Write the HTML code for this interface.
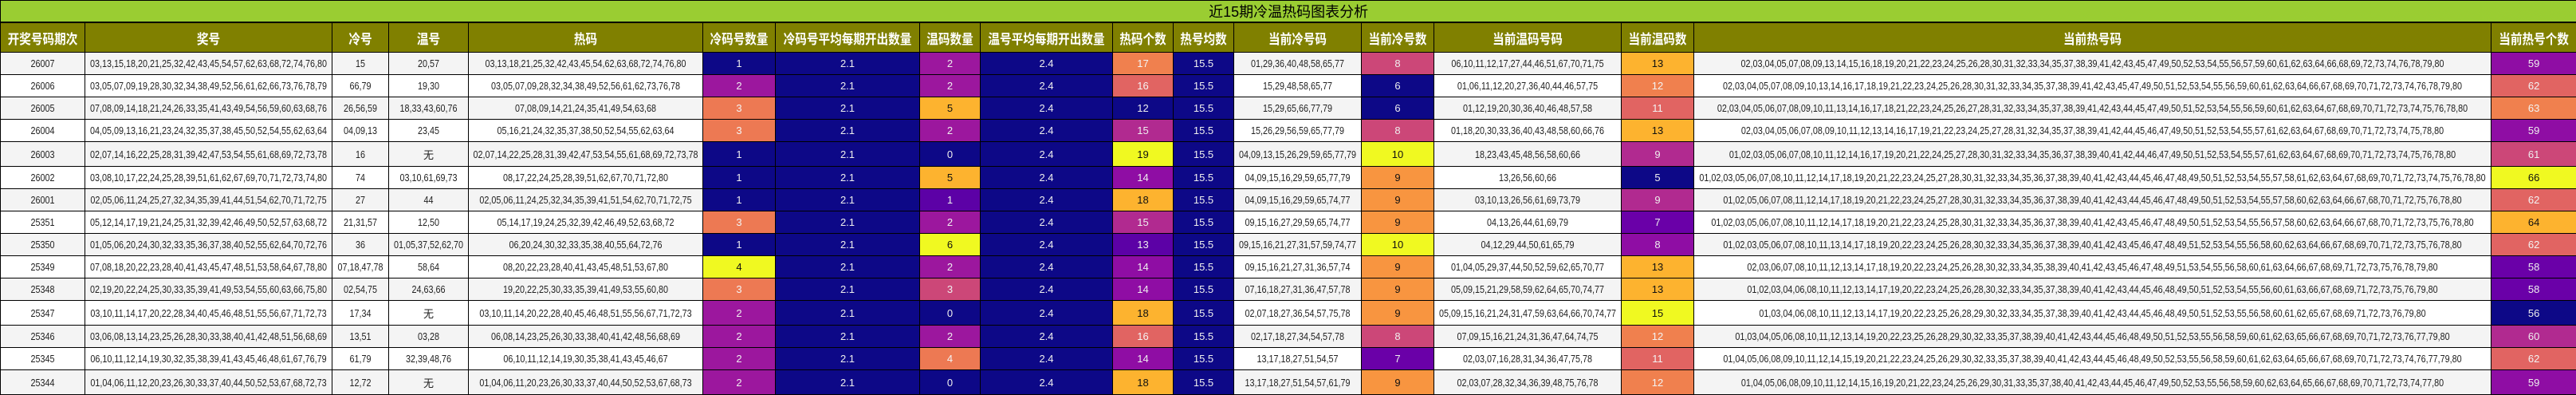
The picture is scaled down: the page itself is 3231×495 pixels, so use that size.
<!DOCTYPE html>
<html><head><meta charset="utf-8"><style>
html,body{margin:0;padding:0;background:#fff;width:3231px;height:495px;overflow:hidden}
table{border-collapse:collapse;table-layout:fixed;width:3231px;font-family:"Liberation Sans","Noto Sans CJK SC",sans-serif;font-size:13px}
td,th{border:1px solid #000;padding:0;text-align:center;white-space:nowrap;overflow:visible}
.t td{background:#9acd32;height:26px;font-size:18px;color:#000;border-bottom:2px solid #000}
.h th{background:#808000;color:#fff;font-size:17px;font-weight:bold;height:36px}
.h th i{transform:scaleX(.86)}
tr.d td{height:27px;color:#222}
tr.d.x td{height:30px}
tr.d:nth-child(odd) td{background:#f4f4f4}
tr.d:nth-child(even) td{background:#fff}
i{font-style:normal;display:flex;justify-content:center;transform:scaleX(.83)}
tr.d td.n{background:#0d0887;color:#eee}
tr.d td.p{background:#9c179e;color:#eee}
tr.d td.o{background:#ed7953;color:#f3f3f3}
tr.d td.y{background:#f0f921;color:#111}
tr.d td.a{background:#fdb32f;color:#111}
tr.d td.k{background:#cc4778;color:#eee}
tr.d td.s{background:#e16462;color:#f3f3f3}
tr.d td.v{background:#5c01a6;color:#eee}
tr.d td.m{background:#8f0da4;color:#eee}
tr.d td.r{background:#b12a90;color:#eee}
tr.d td.f{background:#f89540;color:#111}
tr.d td.q{background:#6a00a8;color:#eee}
tr.d td.e{background:#f0804e;color:#f3f3f3}
</style></head><body>
<table>
<colgroup><col style="width:106px"><col style="width:310px"><col style="width:71px"><col style="width:100px"><col style="width:294px"><col style="width:91px"><col style="width:181px"><col style="width:76px"><col style="width:166px"><col style="width:76px"><col style="width:76px"><col style="width:160px"><col style="width:91px"><col style="width:235px"><col style="width:91px"><col style="width:1000px"><col style="width:107px"></colgroup>
<tr class="t"><td colspan="17">近15期冷温热码图表分析</td></tr>
<tr class="h"><th><i>开奖号码期次</i></th><th><i>奖号</i></th><th><i>冷号</i></th><th><i>温号</i></th><th><i>热码</i></th><th><i>冷码号数量</i></th><th><i>冷码号平均每期开出数量</i></th><th><i>温码数量</i></th><th><i>温号平均每期开出数量</i></th><th><i>热码个数</i></th><th><i>热号均数</i></th><th><i>当前冷号码</i></th><th><i>当前冷号数</i></th><th><i>当前温码号码</i></th><th><i>当前温码数</i></th><th><i>当前热号码</i></th><th><i>当前热号个数</i></th></tr>

<tr class="d"><td><i>26007</i></td><td><i>03,13,15,18,20,21,25,32,42,43,45,54,57,62,63,68,72,74,76,80</i></td><td><i>15</i></td><td><i>20,57</i></td><td><i>03,13,18,21,25,32,42,43,45,54,62,63,68,72,74,76,80</i></td><td class="n">1</td><td class="n">2.1</td><td class="p">2</td><td class="n">2.4</td><td class="e">17</td><td class="n">15.5</td><td><i>01,29,36,40,48,58,65,77</i></td><td class="k">8</td><td><i>06,10,11,12,17,27,44,46,51,67,70,71,75</i></td><td class="a">13</td><td><i>02,03,04,05,07,08,09,13,14,15,16,18,19,20,21,22,23,24,25,26,28,30,31,32,33,34,35,37,38,39,41,42,43,45,47,49,50,52,53,54,55,56,57,59,60,61,62,63,64,66,68,69,72,73,74,76,78,79,80</i></td><td class="m">59</td></tr>

<tr class="d"><td><i>26006</i></td><td><i>03,05,07,09,19,28,30,32,34,38,49,52,56,61,62,66,73,76,78,79</i></td><td><i>66,79</i></td><td><i>19,30</i></td><td><i>03,05,07,09,28,32,34,38,49,52,56,61,62,73,76,78</i></td><td class="p">2</td><td class="n">2.1</td><td class="p">2</td><td class="n">2.4</td><td class="s">16</td><td class="n">15.5</td><td><i>15,29,48,58,65,77</i></td><td class="n">6</td><td><i>01,06,11,12,20,27,36,40,44,46,57,75</i></td><td class="e">12</td><td><i>02,03,04,05,07,08,09,10,13,14,16,17,18,19,21,22,23,24,25,26,28,30,31,32,33,34,35,37,38,39,41,42,43,45,47,49,50,51,52,53,54,55,56,59,60,61,62,63,64,66,67,68,69,70,71,72,73,74,76,78,79,80</i></td><td class="s">62</td></tr>

<tr class="d"><td><i>26005</i></td><td><i>07,08,09,14,18,21,24,26,33,35,41,43,49,54,56,59,60,63,68,76</i></td><td><i>26,56,59</i></td><td><i>18,33,43,60,76</i></td><td><i>07,08,09,14,21,24,35,41,49,54,63,68</i></td><td class="o">3</td><td class="n">2.1</td><td class="a">5</td><td class="n">2.4</td><td class="n">12</td><td class="n">15.5</td><td><i>15,29,65,66,77,79</i></td><td class="n">6</td><td><i>01,12,19,20,30,36,40,46,48,57,58</i></td><td class="s">11</td><td><i>02,03,04,05,06,07,08,09,10,11,13,14,16,17,18,21,22,23,24,25,26,27,28,31,32,33,34,35,37,38,39,41,42,43,44,45,47,49,50,51,52,53,54,55,56,59,60,61,62,63,64,67,68,69,70,71,72,73,74,75,76,78,80</i></td><td class="e">63</td></tr>

<tr class="d"><td><i>26004</i></td><td><i>04,05,09,13,16,21,23,24,32,35,37,38,45,50,52,54,55,62,63,64</i></td><td><i>04,09,13</i></td><td><i>23,45</i></td><td><i>05,16,21,24,32,35,37,38,50,52,54,55,62,63,64</i></td><td class="o">3</td><td class="n">2.1</td><td class="p">2</td><td class="n">2.4</td><td class="r">15</td><td class="n">15.5</td><td><i>15,26,29,56,59,65,77,79</i></td><td class="k">8</td><td><i>01,18,20,30,33,36,40,43,48,58,60,66,76</i></td><td class="a">13</td><td><i>02,03,04,05,06,07,08,09,10,11,12,13,14,16,17,19,21,22,23,24,25,27,28,31,32,34,35,37,38,39,41,42,44,45,46,47,49,50,51,52,53,54,55,57,61,62,63,64,67,68,69,70,71,72,73,74,75,78,80</i></td><td class="m">59</td></tr>

<tr class="d x"><td><i>26003</i></td><td><i>02,07,14,16,22,25,28,31,39,42,47,53,54,55,61,68,69,72,73,78</i></td><td><i>16</i></td><td>无</td><td><i>02,07,14,22,25,28,31,39,42,47,53,54,55,61,68,69,72,73,78</i></td><td class="n">1</td><td class="n">2.1</td><td class="n">0</td><td class="n">2.4</td><td class="y">19</td><td class="n">15.5</td><td><i>04,09,13,15,26,29,59,65,77,79</i></td><td class="y">10</td><td><i>18,23,43,45,48,56,58,60,66</i></td><td class="r">9</td><td><i>01,02,03,05,06,07,08,10,11,12,14,16,17,19,20,21,22,24,25,27,28,30,31,32,33,34,35,36,37,38,39,40,41,42,44,46,47,49,50,51,52,53,54,55,57,61,62,63,64,67,68,69,70,71,72,73,74,75,76,78,80</i></td><td class="k">61</td></tr>

<tr class="d"><td><i>26002</i></td><td><i>03,08,10,17,22,24,25,28,39,51,61,62,67,69,70,71,72,73,74,80</i></td><td><i>74</i></td><td><i>03,10,61,69,73</i></td><td><i>08,17,22,24,25,28,39,51,62,67,70,71,72,80</i></td><td class="n">1</td><td class="n">2.1</td><td class="a">5</td><td class="n">2.4</td><td class="m">14</td><td class="n">15.5</td><td><i>04,09,15,16,29,59,65,77,79</i></td><td class="f">9</td><td><i>13,26,56,60,66</i></td><td class="n">5</td><td><i>01,02,03,05,06,07,08,10,11,12,14,17,18,19,20,21,22,23,24,25,27,28,30,31,32,33,34,35,36,37,38,39,40,41,42,43,44,45,46,47,48,49,50,51,52,53,54,55,57,58,61,62,63,64,67,68,69,70,71,72,73,74,75,76,78,80</i></td><td class="y">66</td></tr>

<tr class="d"><td><i>26001</i></td><td><i>02,05,06,11,24,25,27,32,34,35,39,41,44,51,54,62,70,71,72,75</i></td><td><i>27</i></td><td><i>44</i></td><td><i>02,05,06,11,24,25,32,34,35,39,41,51,54,62,70,71,72,75</i></td><td class="n">1</td><td class="n">2.1</td><td class="v">1</td><td class="n">2.4</td><td class="a">18</td><td class="n">15.5</td><td><i>04,09,15,16,29,59,65,74,77</i></td><td class="f">9</td><td><i>03,10,13,26,56,61,69,73,79</i></td><td class="r">9</td><td><i>01,02,05,06,07,08,11,12,14,17,18,19,20,21,22,23,24,25,27,28,30,31,32,33,34,35,36,37,38,39,40,41,42,43,44,45,46,47,48,49,50,51,52,53,54,55,57,58,60,62,63,64,66,67,68,70,71,72,75,76,78,80</i></td><td class="s">62</td></tr>

<tr class="d"><td><i>25351</i></td><td><i>05,12,14,17,19,21,24,25,31,32,39,42,46,49,50,52,57,63,68,72</i></td><td><i>21,31,57</i></td><td><i>12,50</i></td><td><i>05,14,17,19,24,25,32,39,42,46,49,52,63,68,72</i></td><td class="o">3</td><td class="n">2.1</td><td class="p">2</td><td class="n">2.4</td><td class="r">15</td><td class="n">15.5</td><td><i>09,15,16,27,29,59,65,74,77</i></td><td class="f">9</td><td><i>04,13,26,44,61,69,79</i></td><td class="q">7</td><td><i>01,02,03,05,06,07,08,10,11,12,14,17,18,19,20,21,22,23,24,25,28,30,31,32,33,34,35,36,37,38,39,40,41,42,43,45,46,47,48,49,50,51,52,53,54,55,56,57,58,60,62,63,64,66,67,68,70,71,72,73,75,76,78,80</i></td><td class="a">64</td></tr>

<tr class="d"><td><i>25350</i></td><td><i>01,05,06,20,24,30,32,33,35,36,37,38,40,52,55,62,64,70,72,76</i></td><td><i>36</i></td><td><i>01,05,37,52,62,70</i></td><td><i>06,20,24,30,32,33,35,38,40,55,64,72,76</i></td><td class="n">1</td><td class="n">2.1</td><td class="y">6</td><td class="n">2.4</td><td class="v">13</td><td class="n">15.5</td><td><i>09,15,16,21,27,31,57,59,74,77</i></td><td class="y">10</td><td><i>04,12,29,44,50,61,65,79</i></td><td class="m">8</td><td><i>01,02,03,05,06,07,08,10,11,13,14,17,18,19,20,22,23,24,25,26,28,30,32,33,34,35,36,37,38,39,40,41,42,43,45,46,47,48,49,51,52,53,54,55,56,58,60,62,63,64,66,67,68,69,70,71,72,73,75,76,78,80</i></td><td class="s">62</td></tr>

<tr class="d"><td><i>25349</i></td><td><i>07,08,18,20,22,23,28,40,41,43,45,47,48,51,53,58,64,67,78,80</i></td><td><i>07,18,47,78</i></td><td><i>58,64</i></td><td><i>08,20,22,23,28,40,41,43,45,48,51,53,67,80</i></td><td class="y">4</td><td class="n">2.1</td><td class="p">2</td><td class="n">2.4</td><td class="m">14</td><td class="n">15.5</td><td><i>09,15,16,21,27,31,36,57,74</i></td><td class="f">9</td><td><i>01,04,05,29,37,44,50,52,59,62,65,70,77</i></td><td class="a">13</td><td><i>02,03,06,07,08,10,11,12,13,14,17,18,19,20,22,23,24,25,26,28,30,32,33,34,35,38,39,40,41,42,43,45,46,47,48,49,51,53,54,55,56,58,60,61,63,64,66,67,68,69,71,72,73,75,76,78,79,80</i></td><td class="q">58</td></tr>

<tr class="d"><td><i>25348</i></td><td><i>02,19,20,22,24,25,30,33,35,39,41,49,53,54,55,60,63,66,75,80</i></td><td><i>02,54,75</i></td><td><i>24,63,66</i></td><td><i>19,20,22,25,30,33,35,39,41,49,53,55,60,80</i></td><td class="o">3</td><td class="n">2.1</td><td class="k">3</td><td class="n">2.4</td><td class="m">14</td><td class="n">15.5</td><td><i>07,16,18,27,31,36,47,57,78</i></td><td class="f">9</td><td><i>05,09,15,21,29,58,59,62,64,65,70,74,77</i></td><td class="a">13</td><td><i>01,02,03,04,06,08,10,11,12,13,14,17,19,20,22,23,24,25,26,28,30,32,33,34,35,37,38,39,40,41,42,43,44,45,46,48,49,50,51,52,53,54,55,56,60,61,63,66,67,68,69,71,72,73,75,76,79,80</i></td><td class="q">58</td></tr>

<tr class="d x"><td><i>25347</i></td><td><i>03,10,11,14,17,20,22,28,34,40,45,46,48,51,55,56,67,71,72,73</i></td><td><i>17,34</i></td><td>无</td><td><i>03,10,11,14,20,22,28,40,45,46,48,51,55,56,67,71,72,73</i></td><td class="p">2</td><td class="n">2.1</td><td class="n">0</td><td class="n">2.4</td><td class="a">18</td><td class="n">15.5</td><td><i>02,07,18,27,36,54,57,75,78</i></td><td class="f">9</td><td><i>05,09,15,16,21,24,31,47,59,63,64,66,70,74,77</i></td><td class="y">15</td><td><i>01,03,04,06,08,10,11,12,13,14,17,19,20,22,23,25,26,28,29,30,32,33,34,35,37,38,39,40,41,42,43,44,45,46,48,49,50,51,52,53,55,56,58,60,61,62,65,67,68,69,71,72,73,76,79,80</i></td><td class="n">56</td></tr>

<tr class="d"><td><i>25346</i></td><td><i>03,06,08,13,14,23,25,26,28,30,33,38,40,41,42,48,51,56,68,69</i></td><td><i>13,51</i></td><td><i>03,28</i></td><td><i>06,08,14,23,25,26,30,33,38,40,41,42,48,56,68,69</i></td><td class="p">2</td><td class="n">2.1</td><td class="p">2</td><td class="n">2.4</td><td class="s">16</td><td class="n">15.5</td><td><i>02,17,18,27,34,54,57,78</i></td><td class="k">8</td><td><i>07,09,15,16,21,24,31,36,47,64,74,75</i></td><td class="e">12</td><td><i>01,03,04,05,06,08,10,11,12,13,14,19,20,22,23,25,26,28,29,30,32,33,35,37,38,39,40,41,42,43,44,45,46,48,49,50,51,52,53,55,56,58,59,60,61,62,63,65,66,67,68,69,70,71,72,73,76,77,79,80</i></td><td class="r">60</td></tr>

<tr class="d"><td><i>25345</i></td><td><i>06,10,11,12,14,19,30,32,35,38,39,41,43,45,46,48,61,67,76,79</i></td><td><i>61,79</i></td><td><i>32,39,48,76</i></td><td><i>06,10,11,12,14,19,30,35,38,41,43,45,46,67</i></td><td class="p">2</td><td class="n">2.1</td><td class="o">4</td><td class="n">2.4</td><td class="m">14</td><td class="n">15.5</td><td><i>13,17,18,27,51,54,57</i></td><td class="q">7</td><td><i>02,03,07,16,28,31,34,36,47,75,78</i></td><td class="s">11</td><td><i>01,04,05,06,08,09,10,11,12,14,15,19,20,21,22,23,24,25,26,29,30,32,33,35,37,38,39,40,41,42,43,44,45,46,48,49,50,52,53,55,56,58,59,60,61,62,63,64,65,66,67,68,69,70,71,72,73,74,76,77,79,80</i></td><td class="s">62</td></tr>

<tr class="d x"><td><i>25344</i></td><td><i>01,04,06,11,12,20,23,26,30,33,37,40,44,50,52,53,67,68,72,73</i></td><td><i>12,72</i></td><td>无</td><td><i>01,04,06,11,20,23,26,30,33,37,40,44,50,52,53,67,68,73</i></td><td class="p">2</td><td class="n">2.1</td><td class="n">0</td><td class="n">2.4</td><td class="a">18</td><td class="n">15.5</td><td><i>13,17,18,27,51,54,57,61,79</i></td><td class="f">9</td><td><i>02,03,07,28,32,34,36,39,48,75,76,78</i></td><td class="e">12</td><td><i>01,04,05,06,08,09,10,11,12,14,15,16,19,20,21,22,23,24,25,26,29,30,31,33,35,37,38,40,41,42,43,44,45,46,47,49,50,52,53,55,56,58,59,60,62,63,64,65,66,67,68,69,70,71,72,73,74,77,80</i></td><td class="m">59</td></tr>
</table>
</body></html>
